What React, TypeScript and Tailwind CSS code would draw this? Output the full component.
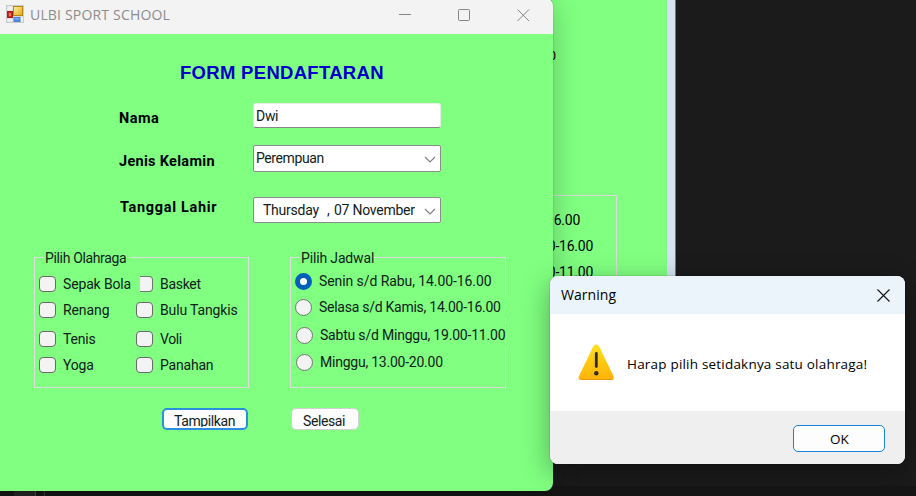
import React from "react";

function WindowIcon() {
  return (
    <svg width="18" height="18" viewBox="0 0 18 18">
      <defs>
        <linearGradient id="gold" x1="0" y1="0" x2="1" y2="1">
          <stop offset="0" stopColor="#fff3a0" />
          <stop offset="1" stopColor="#e3a512" />
        </linearGradient>
        <linearGradient id="blue" x1="0" y1="0" x2="0" y2="1">
          <stop offset="0" stopColor="#8fbcf8" />
          <stop offset="1" stopColor="#3b78dc" />
        </linearGradient>
      </defs>
      <rect x="0.5" y="0.5" width="17" height="17" fill="#d9d9d9" stroke="#cbcbcb" />
      <rect x="1.5" y="1.5" width="5" height="4" fill="#f2f2f2" />
      <rect x="1.5" y="14" width="5" height="2.5" fill="#f2f2f2" />
      <rect x="14.5" y="12" width="2.5" height="4.5" fill="#f2f2f2" />
      <rect x="1.5" y="6.5" width="5" height="6" fill="#c9281d" stroke="#a52219" />
      <rect x="3" y="8" width="2" height="3" fill="#e8796c" />
      <rect x="7.5" y="1.5" width="9" height="9" fill="url(#gold)" stroke="#b8860b" />
      <rect x="8" y="12.5" width="6" height="4" fill="url(#blue)" stroke="#4a80d8" />
    </svg>
  );
}

function Chevron() {
  return (
    <svg width="12" height="7" viewBox="0 0 12 7" fill="none" stroke="#808080" strokeWidth="1.2">
      <path d="M1 1l5 5 5-5" />
    </svg>
  );
}

function Check({ label, clipped, tracking }: { label: string; clipped?: boolean; tracking: string }) {
  return (
    <label className="flex h-4 items-center">
      <span
        className={
          clipped
            ? "ml-1 mr-[7px] h-4 w-[13px] rounded-r-[4px] border border-l-0 border-[#737373] bg-[#f3f3f3]"
            : "mr-[7px] h-4 w-[17px] rounded-[4px] border border-[#686868] bg-[#f3f3f3]"
        }
      />
      <span className={"whitespace-nowrap text-[14px] leading-4 " + tracking}>{label}</span>
    </label>
  );
}

function Radio({ label, on, tracking }: { label: string; on?: boolean; tracking: string }) {
  return (
    <label className="flex h-[22px] w-fit items-center bg-[#80ff80]">
      <span
        className={
          on
            ? "mr-[7px] size-[17px] rounded-full border-[5px] border-[#005fb8] bg-white"
            : "mr-[7px] size-[17px] rounded-full border border-[#747474] bg-[#f3f3f3]"
        }
      />
      <span className={"whitespace-nowrap text-[14px] leading-4 " + tracking}>{label}</span>
    </label>
  );
}

function BackWindow() {
  return (
    <div className="absolute left-0 top-0 h-[450px] w-[676px] border-r border-[#777] bg-[#d5e3f2] pr-2">
      <div className="flex h-full flex-col items-end bg-[#80ff80] pr-[50px] pt-[48px] font-['Roboto','Liberation_Sans',sans-serif] text-[14px] leading-4 text-black">
        <div className="mr-[61px] text-[13px]">0</div>
        <div className="mt-[131px] flex h-[190px] w-[215px] flex-col gap-[10px] border border-[#d8dcd8] pl-[29px] pt-[16px]">
          <span className="mr-[36px] flex justify-end whitespace-nowrap text-[14px] tracking-[-0.25px]">14.00-16.00</span>
          <span className="mr-[23px] flex justify-end whitespace-nowrap text-[14px] tracking-[-0.25px]">14.00-16.00</span>
          <span className="mr-[23px] flex justify-end whitespace-nowrap text-[14px] tracking-[-0.25px]">19.00-11.00</span>
        </div>
      </div>
    </div>
  );
}

function FormWindow() {
  return (
    <div className="absolute -left-2 top-[-2px] flex h-[493px] w-[561px] flex-col overflow-hidden rounded-[8px] bg-[#80ff80] shadow-[0_6px_28px_rgba(0,0,0,0.24),0_0_1px_rgba(0,0,0,0.7)]">
      <header className="flex h-9 shrink-0 items-center bg-[#f3f3f3] pl-[14px] pr-[24px] font-['Open_Sans','Noto_Sans',sans-serif]">
        <span className="mt-[-4px]"><WindowIcon /></span>
        <span className="ml-[6px] mt-[-4px] whitespace-nowrap text-[14px] tracking-[0.18px] text-[#8c8c8c]">ULBI SPORT SCHOOL</span>
        <div className="ml-auto mt-[-2px] flex items-center gap-[46px]">
          <svg className="translate-x-px" width="13" height="13" viewBox="0 0 13 13" stroke="#858585"><path d="M0 5.5h12" /></svg>
          <svg className="translate-x-px" width="13" height="13" viewBox="0 0 13 13" fill="none" stroke="#858585"><rect x=".5" y=".5" width="11" height="11" rx="1" /></svg>
          <svg className="translate-x-px" width="13" height="13" viewBox="0 0 13 13" stroke="#858585"><path d="M.5.5l11.5 11.5M12 .5L.5 12" /></svg>
        </div>
      </header>

      <main className="flex flex-col pl-2 font-['Roboto','Liberation_Sans',sans-serif] text-[#10201a]">
        <h1 className="ml-[180px] mt-[29px] h-5 whitespace-nowrap font-['Liberation_Sans',sans-serif] text-[18.5px] font-bold leading-5 tracking-[0.3px] text-[#0000c8]">FORM PENDAFTARAN</h1>
        <section className="ml-[119px] mt-[20px] flex flex-col text-[14px] leading-4">
          <div className="flex h-[25px]">
            <span className="w-[134px] pt-[8px] text-[14.5px] font-bold tracking-[0.5px] text-black">Nama</span>
            <div className="h-[25px] w-[188px] rounded-[3px] border border-[#e6eee6] border-b-[#868686] bg-white pl-[2px] pt-[4px] tracking-[-0.3px]">Dwi</div>
          </div>
          <div className="mt-[17px] flex h-[27px]">
            <span className="w-[134px] pt-[9px] text-[14.5px] font-bold tracking-[0.3px] text-black">Jenis Kelamin</span>
            <div className="flex h-[27px] w-[188px] justify-between rounded-[2px] border border-[#8c8c8c] bg-white pl-[2px] pr-[4px] pt-[4px]">
              <span className="tracking-[-0.4px]">Perempuan</span>
              <span className="mt-[6px]"><Chevron /></span>
            </div>
          </div>
          <div className="mt-[25px] flex h-[26px]">
            <span className="w-[134px] pl-px pt-[3px] text-[14.5px] font-bold tracking-[0.68px] text-black">Tanggal Lahir</span>
            <div className="flex h-[26px] w-[188px] justify-between rounded-[2px] border border-[#8c8c8c] bg-white pl-[9px] pr-[4px] pt-[4px]">
              <span className="flex whitespace-nowrap tracking-[-0.25px]"><span className="w-[64px]">Thursday</span><span className="w-[7px]">,</span><span>07 November</span></span>
              <span className="mt-[6px]"><Chevron /></span>
            </div>
          </div>
        </section>

        <section className="ml-[34px] mt-[34px] flex gap-[41px]">
          <div className="flex h-[131px] w-[215px] flex-col border border-[#dce0dc]">
            <div className="ml-2 mt-[-8px] h-4 w-[86px] whitespace-nowrap bg-[#80ff80] pl-[2px] text-[14px] leading-4 tracking-[-0.35px]">Pilih Olahraga</div>
            <div className="ml-1 mt-[10px] grid grid-cols-[97px_110px]">
              <div className="flex flex-col">
                <Check label="Sepak Bola" tracking="tracking-[-0.15px]" />
                <div className="h-[10px]" />
                <Check label="Renang" tracking="tracking-[-0.1px]" />
                <div className="h-[13px]" />
                <Check label="Tenis" tracking="tracking-[-0.2px]" />
                <div className="h-[10px]" />
                <Check label="Yoga" tracking="tracking-[-0.2px]" />
              </div>
              <div className="flex flex-col">
                <Check label="Basket" tracking="tracking-[-0.3px]" clipped />
                <div className="h-[10px]" />
                <Check label="Bulu Tangkis" tracking="tracking-[-0.15px]" />
                <div className="h-[13px]" />
                <Check label="Voli" tracking="tracking-[-0.4px]" />
                <div className="h-[10px]" />
                <Check label="Panahan" tracking="tracking-[-0.2px]" />
              </div>
            </div>
          </div>
          <div className="flex h-[131px] w-[216px] flex-col border border-[#dce0dc]">
            <div className="ml-2 mt-[-8px] h-4 w-[74px] whitespace-nowrap bg-[#80ff80] pl-[2px] text-[14px] leading-4 tracking-[-0.15px]">Pilih Jadwal</div>
            <div className="ml-1 mt-[4px] flex flex-col">
              <Radio on label="Senin s/d Rabu, 14.00-16.00" tracking="tracking-[-0.08px]" />
              <div className="mt-1 w-[212px] bg-[#80ff80]"><Radio label="Selasa s/d Kamis, 14.00-16.00" tracking="tracking-[-0.26px]" /></div>
              <div className="mt-[6px] w-[212px] bg-[#80ff80] pl-px"><Radio label="Sabtu s/d Minggu, 19.00-11.00" tracking="tracking-[-0.2px]" /></div>
              <div className="mt-[5px] pl-px"><Radio label="Minggu, 13.00-20.00" tracking="tracking-[-0.23px]" /></div>
            </div>
          </div>
        </section>

        <section className="ml-[162px] mt-[20px] flex gap-[43px] text-[14px] leading-4">
          <button className="h-[22px] w-[86px] rounded-[5px] border-2 border-[#2a8fdc] bg-[#fdfdfd] pl-[10px] text-left">
            <span className="block h-[16px] overflow-hidden whitespace-nowrap pt-[2px] leading-4 tracking-[-0.4px]">Tampilkan</span>
          </button>
          <button className="h-[22px] w-[68px] rounded-[5px] border border-[#d0d0d0] bg-[#fdfdfd] pl-[11px] pt-[3px] text-left tracking-[-0.4px]">Selesai</button>
        </section>
      </main>
    </div>
  );
}

function WarningDialog() {
  return (
    <div className="absolute left-[550px] top-[276px] flex h-[188px] w-[355px] flex-col overflow-hidden rounded-[8px] bg-white font-['Open_Sans','Noto_Sans',sans-serif] text-black shadow-[0_8px_28px_rgba(0,0,0,0.35),0_0_1px_rgba(0,0,0,0.8)]">
      <header className="flex h-[38px] items-center justify-between bg-[#ebf4fb] pl-[11px] pr-[15px]">
        <span className="mt-[-2px] text-[14px] tracking-[0.05px]">Warning</span>
        <svg width="13" height="13" viewBox="0 0 13 13" stroke="#111" strokeWidth="1.1"><path d="M.5.5l12 12M12.5.5l-12 12" /></svg>
      </header>
      <div className="flex h-[97px] items-center pl-[28px]">
        <svg width="37" height="37" viewBox="0 0 37 37">
          <defs>
            <linearGradient id="warn" x1="0" y1="0" x2="0" y2="1">
              <stop offset="0" stopColor="#ffe11a" />
              <stop offset="1" stopColor="#ffb109" />
            </linearGradient>
          </defs>
          <path d="M15.2 2.6Q18.2-1.6 21.2 2.6L35.6 32.2Q36.8 36 33 36H3.6Q-.4 36 .9 32.2Z" fill="url(#warn)" />
          <path d="M1.6 35Q2.6 36 4 36H33Q34.5 36 35.2 35Z" fill="#e99a12" />
          <path d="M18.3 9.5V22.5" stroke="#2f2b1c" strokeWidth="2.8" strokeLinecap="round" />
          <circle cx="18.3" cy="29.3" r="2.2" fill="#2f2b1c" />
        </svg>
        <span className="ml-[12px] mt-[3px] whitespace-nowrap text-[13.5px] tracking-[0.2px]">Harap pilih setidaknya satu olahraga!</span>
      </div>
      <footer className="flex flex-1 justify-end bg-[#efefef] pr-5 pt-[14px]">
        <button className="h-[27px] w-[92px] rounded-[5px] border-[1.5px] border-[#1883d7] bg-[#fdfdfd] pl-px text-[13.5px] leading-6">OK</button>
      </footer>
    </div>
  );
}

export default function App() {
  return (
    <div className="relative h-[496px] w-[916px] overflow-hidden bg-[#1b1b1b]">
      <div className="absolute bottom-0 left-0 flex h-[10px] w-full">
        <div className="w-[14px] bg-[#161616]" />
        <div className="w-[22px] border-r border-[#4a4a4a] bg-[#262626]" />
        <div className="w-[9px] border-r border-[#3c3c3c] bg-[#161616]" />
        <div className="flex-1 bg-[#161616]" />
      </div>
      <BackWindow />
      <FormWindow />
      <WarningDialog />
    </div>
  );
}
